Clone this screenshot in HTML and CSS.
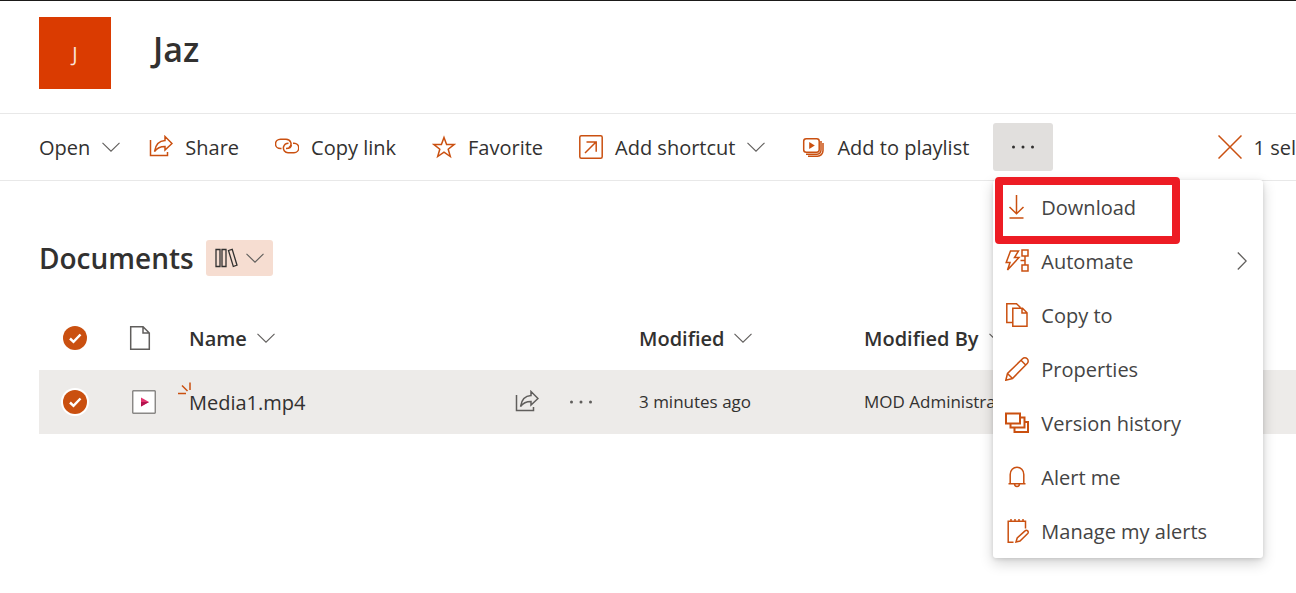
FILE: index.html
```html
<!DOCTYPE html>
<html lang="en">
<head>
  <meta charset="UTF-8">
  <meta name="viewport" content="width=device-width, initial-scale=1.0">
  <title>Jaz - Documents</title>
  <link rel="stylesheet" href="styles.css">
</head>
<body>
  <!-- shared icons -->
  <svg class="sprite" aria-hidden="true">
    <symbol id="chevron" viewBox="0 0 18 10"><path d="M.5 .8L9 9.2L17.5 .8"/></symbol>
    <symbol id="share" viewBox="0 0 24 24"><path d="M1.5 5V20.500H18.500V17M16 1.500L23 8.500L16 15V11.500C11 11.500 8 13 5.500 16.500C6.500 10 10 5.800 16 5.500Z"/></symbol>
    <symbol id="dots" viewBox="0 0 24 24"><circle cx="2.500" cy="12" r="1.500"/><circle cx="12" cy="12" r="1.500"/><circle cx="21.500" cy="12" r="1.500"/></symbol>
    <symbol id="check" viewBox="0 0 24 24"><path d="M7 12.500L10.500 15.800L17.500 8.500"/></symbol>
  </svg>

  <header class="site-header">
    <a href="#" class="site-logo">J</a>
    <h1 class="site-title">Jaz</h1>
  </header>

  <div class="command-bar">
    <button type="button" class="command open">Open <svg class="chevron"><use href="#chevron"/></svg></button>
    <button type="button" class="command"><svg class="icon"><use href="#share"/></svg> Share</button>
    <button type="button" class="command">
      <svg class="icon" viewBox="0 0 24 24"><path d="M6.500 13.500H5.500A5 4.600 0 0 1 5.500 4.300H11A5 4.600 0 0 1 14 12.600M18 8.200H19A4.700 4.700 0 0 1 19 17.700H13A4.700 4.700 0 0 1 8.500 12C9.200 9.500 11 8.200 13.500 8.200M16.300 10C16.300 12.500 14.500 13.500 11 13.500"/></svg>
      Copy link
    </button>
    <button type="button" class="command">
      <svg class="icon" viewBox="0 0 24 24"><path d="M12 2.500L14.600 9.600H22L16.200 14.200L18.300 21.500L12 17.200L5.700 21.500L7.800 14.200L2 9.600H9.400Z"/></svg>
      Favorite
    </button>
    <button type="button" class="command">
      <svg class="icon" viewBox="0 0 24 24"><rect x=".8" y=".8" width="22.400" height="22.400" rx="1.500"/><path d="M6 18L17 7M7.500 7H17.200V16.700"/></svg>
      Add shortcut
      <svg class="chevron"><use href="#chevron"/></svg>
    </button>
    <button type="button" class="command">
      <svg class="icon" viewBox="0 0 24 24"><rect x="2.700" y="3.700" width="15.500" height="13.500" rx="2.500"/><path class="solid" d="M8.200 7V14L13.800 10.500Z"/><path d="M5 19.200H16A4.300 4.300 0 0 0 20 15V6M7 21.200H16.500A5.500 5.500 0 0 0 22 15.800V8"/></svg>
      Add to playlist
    </button>
    <div class="overflow">
      <button type="button" class="more-btn" aria-label="More" aria-expanded="true"><svg class="icon dots"><use href="#dots"/></svg></button>
      <div class="menu">
        <button type="button" class="menu-item highlighted">
          <svg class="icon" viewBox="0 0 24 24"><path d="M11.500 0V18.500M4.500 12L11.500 18.800L18.500 12M4.500 23H18.500"/></svg>
          Download
        </button>
        <button type="button" class="menu-item">
          <svg class="icon" viewBox="0 0 24 24"><path d="M5.500 2H13.500L9.500 8.500H14L2.500 21L5 13.500H1.200ZM17 1H23V7H17ZM17 16H23V22H17ZM20 7V16M15.500 11.500H20"/></svg>
          Automate
          <svg class="arrow" viewBox="0 0 10 18"><path d="M.8 .5L9.200 9L.8 17.500"/></svg>
        </button>
        <button type="button" class="menu-item">
          <svg class="icon" viewBox="0 0 24 24"><path d="M7.500 19.500H1.800V.800H11.500L15.500 4.500M7.800 5.200H17.500L22 9.700V23.200H7.800ZM17 5.500V10H22"/></svg>
          Copy to
        </button>
        <button type="button" class="menu-item">
          <svg class="icon" viewBox="0 0 24 24"><path d="M.800 23.200L2.500 16.500L17.500 1.800A3.300 3.300 0 0 1 22.200 6.500L7.500 21.500ZM2.500 16.500L7.500 21.500M16 3.300L20.700 8"/></svg>
          Properties
        </button>
        <button type="button" class="menu-item">
          <svg class="icon bold" viewBox="0 0 24 24"><path d="M1 2.500H15V12.500H1ZM5.500 12.500V16.500H19.500V6.500H15M9.500 16.500V21H23V11H19.500"/></svg>
          Version history
        </button>
        <button type="button" class="menu-item">
          <svg class="icon" viewBox="0 0 24 24"><path d="M3.500 18.700H20.500M5.200 18.700V9.500A6.800 7.300 0 0 1 18.800 9.500V18.700M9.500 18.700A2.500 2.700 0 0 0 14.500 18.700"/></svg>
          Alert me
        </button>
        <button type="button" class="menu-item">
          <svg class="icon" viewBox="0 0 24 24"><path d="M8.500 23.200H3.200V2.200H20.500V9.500M6 0V3M10 0V3M14 0V3M18 0V3M11 23L12.200 19L20 11.900A1.600 1.600 0 0 1 22.700 14.500L15 22Z"/></svg>
          Manage my alerts
        </button>
      </div>
    </div>
    <button type="button" class="command selection">
      <svg class="icon" viewBox="0 0 24 24"><path d="M.5 .5L23.500 23.500M23.500 .5L.5 23.500"/></svg>
      1 sel
    </button>
  </div>

  <main class="library">
    <div class="library-head">
      <h2 class="library-title">Documents</h2>
      <button type="button" class="view-btn" aria-label="Switch library">
        <svg class="books" viewBox="0 0 24 20"><path d="M1 1.500H5V18.500H1ZM7 1.500H11V18.500H7ZM13.500 2.500L17.200 1.300L22 17.200L18.300 18.500Z"/></svg>
        <svg class="chevron"><use href="#chevron"/></svg>
      </button>
    </div>

    <table class="files">
      <colgroup>
        <col class="col-check">
        <col class="col-type">
        <col class="col-name">
        <col class="col-modified">
        <col>
      </colgroup>
      <thead>
        <tr>
          <th>
            <label class="check"><input type="checkbox" aria-label="Select all" checked><svg><use href="#check"/></svg></label>
          </th>
          <th class="type-head">
            <svg class="icon" viewBox="0 0 24 24"><path d="M2.700 .700H15L21.300 7V23.300H2.700ZM15 .700V7H21.300"/></svg>
          </th>
          <th><button type="button" class="sort">Name <svg class="chevron"><use href="#chevron"/></svg></button></th>
          <th><button type="button" class="sort">Modified <svg class="chevron"><use href="#chevron"/></svg></button></th>
          <th><button type="button" class="sort">Modified By <svg class="chevron"><use href="#chevron"/></svg></button></th>
        </tr>
      </thead>
      <tbody>
        <tr class="selected">
          <td>
            <label class="check"><input type="checkbox" aria-label="Select Media1.mp4" checked><svg><use href="#check"/></svg></label>
          </td>
          <td class="type-cell">
            <svg class="icon" viewBox="0 0 24 24">
              <rect class="frame" x=".7" y=".7" width="22.600" height="22.600" rx="1"/>
              <path class="play" d="M9 7.500V16.500L17 12Z"/>
              <path class="play-low" d="M9 12V16.500L17 12Z"/>
            </svg>
          </td>
          <td>
            <div class="name-cell">
              <a href="#" class="file-name">
                <svg class="new-mark" viewBox="0 0 14 14"><path d="M0 11.500H8M4 3.500L9.500 9M12 .5V8"/></svg>
                Media1.mp4
              </a>
              <button type="button" class="row-btn" aria-label="Share"><svg class="icon"><use href="#share"/></svg></button>
              <button type="button" class="row-btn" aria-label="More actions"><svg class="icon dots"><use href="#dots"/></svg></button>
            </div>
          </td>
          <td class="meta">3 minutes ago</td>
          <td class="meta">MOD Administrator</td>
        </tr>
      </tbody>
    </table>
  </main>
</body>
</html>
```
FILE: styles.css
```css
:root {
  --accent: #ca5010;
  --logo: #da3b01;
  --text: #323130;
  --muted: #605e5c;
  --line: #e8e8e8;
  --row: #edebe9;
}

*,
*::after {
  margin: 0;
  padding: 0;
  box-sizing: border-box;
}

body {
  font-family: "Open Sans", "Noto Sans", sans-serif;
  font-size: 20px;
  color: var(--text);
  background: white;
  border-top: 1px solid #1b1a19;
  min-height: 100vh;
  overflow: hidden;
}

button {
  font: inherit;
  color: inherit;
  background: none;
  border: none;
  cursor: pointer;
  white-space: nowrap;
}

a {
  color: inherit;
  text-decoration: none;
}

svg {
  display: block;
  flex: none;
  fill: none;
  stroke: currentColor;
}

.sprite {
  position: absolute;
  width: 0;
  height: 0;
}

.icon {
  width: 24px;
  height: 24px;
  color: var(--accent);
  stroke-width: 1.5;
}

.icon.bold {
  stroke-width: 2;
}

.icon .solid {
  fill: currentColor;
  stroke: none;
}

.icon.dots {
  color: var(--text);
  fill: currentColor;
  stroke: none;
}

.chevron {
  width: 18px;
  height: 10px;
  color: var(--muted);
  stroke-width: 1.1;
}

/* header */
.site-header {
  display: flex;
  align-items: flex-start;
  gap: 42px;
  padding: 16px 39px 24px;
  border-bottom: 1px solid var(--line);
}

.site-logo {
  display: grid;
  place-items: center;
  width: 72px;
  height: 72px;
  background: var(--logo);
  color: #fbe3d9;
}

.site-title {
  font-size: 34px;
  font-weight: 600;
  line-height: 64px;
}

/* command bar */
.command-bar {
  display: flex;
  align-items: center;
  padding-left: 27px;
  height: 67px;
  border-bottom: 1px solid var(--line);
}

.command {
  display: flex;
  flex: none;
  align-items: center;
  gap: 12px;
  height: 48px;
  margin-right: 12px;
  padding: 0 12px;
}

.command.open {
  margin-right: 5px;
}

.command.selection {
  margin: 0 0 0 auto;
  padding-right: 0;
}

.overflow {
  position: relative;
}

.more-btn {
  display: grid;
  place-items: center;
  width: 60px;
  height: 48px;
  background: #e1dfdd;
  border-radius: 3px;
}

.menu {
  position: absolute;
  top: 57px;
  left: 0;
  z-index: 2;
  width: 270px;
  background: white;
  border-radius: 3px;
  box-shadow: 0 5px 14px rgba(0, 0, 0, 0.18), 0 1px 4px rgba(0, 0, 0, 0.12);
}

.menu-item {
  display: flex;
  align-items: center;
  gap: 12px;
  width: 100%;
  height: 54px;
  padding: 0 12px;
  color: #444;
}

.menu-item.highlighted {
  position: relative;
}

.menu-item.highlighted::after {
  content: "";
  position: absolute;
  top: -3px;
  left: 2px;
  width: 185px;
  height: 67px;
  border: 8px solid #ed1c24;
  border-radius: 4px;
}

.arrow {
  width: 10px;
  height: 18px;
  margin-left: auto;
  margin-right: 4px;
  color: var(--muted);
  stroke-width: 1.3;
}

/* library */
.library {
  padding: 59px 0 0 39px;
}

.library-head {
  display: flex;
  align-items: center;
  gap: 12px;
  height: 36px;
  margin-bottom: 30px;
}

.library-title {
  font-size: 28px;
  font-weight: 600;
}

.view-btn {
  display: flex;
  align-items: center;
  gap: 7px;
  height: 36px;
  padding: 0 9px;
  background: #f6ddd1;
  border-radius: 3px;
}

.books {
  width: 24px;
  height: 20px;
  stroke-width: 1.3;
}

.files {
  width: 100%;
  table-layout: fixed;
  border-collapse: collapse;
}

.col-check {
  width: 72px;
}

.col-type {
  width: 66px;
}

.col-name {
  width: 450px;
}

.col-modified {
  width: 225px;
}

.files th,
.files td {
  height: 64px;
  padding: 0 12px;
  text-align: left;
  vertical-align: middle;
  white-space: nowrap;
}

.files .type-head {
  padding-left: 17px;
}

.files .type-head .icon {
  color: var(--muted);
}

.files .type-cell {
  padding-left: 21px;
}

.selected {
  background: var(--row);
}

.check {
  display: grid;
  place-items: center;
  width: 48px;
  cursor: pointer;
}

.check input,
.check svg {
  grid-area: 1 / 1;
  width: 24px;
  height: 24px;
}

.check input {
  appearance: none;
  border-radius: 50%;
}

.check input:checked {
  background: var(--accent);
}

.check svg {
  color: white;
  stroke-width: 2.5;
  pointer-events: none;
}

.selected .check input {
  box-shadow: 0 0 0 2px white;
}

.frame {
  fill: white;
  stroke: #8a8886;
}

.play {
  fill: #e3336e;
  stroke: none;
}

.play-low {
  fill: #b3124d;
  stroke: none;
}

.sort {
  display: flex;
  align-items: center;
  gap: 10px;
  font-weight: 600;
}

.name-cell {
  display: flex;
  align-items: center;
  gap: 30px;
  padding-right: 22px;
}

.file-name {
  position: relative;
  flex: 1;
  font-weight: 500;
}

.new-mark {
  position: absolute;
  top: -7px;
  left: -11px;
  width: 14px;
  height: 14px;
  color: var(--accent);
  stroke-width: 1.5;
}

.row-btn .icon {
  color: var(--muted);
}

.files .meta {
  padding-bottom: 2px;
  font-size: 17px;
}
```
